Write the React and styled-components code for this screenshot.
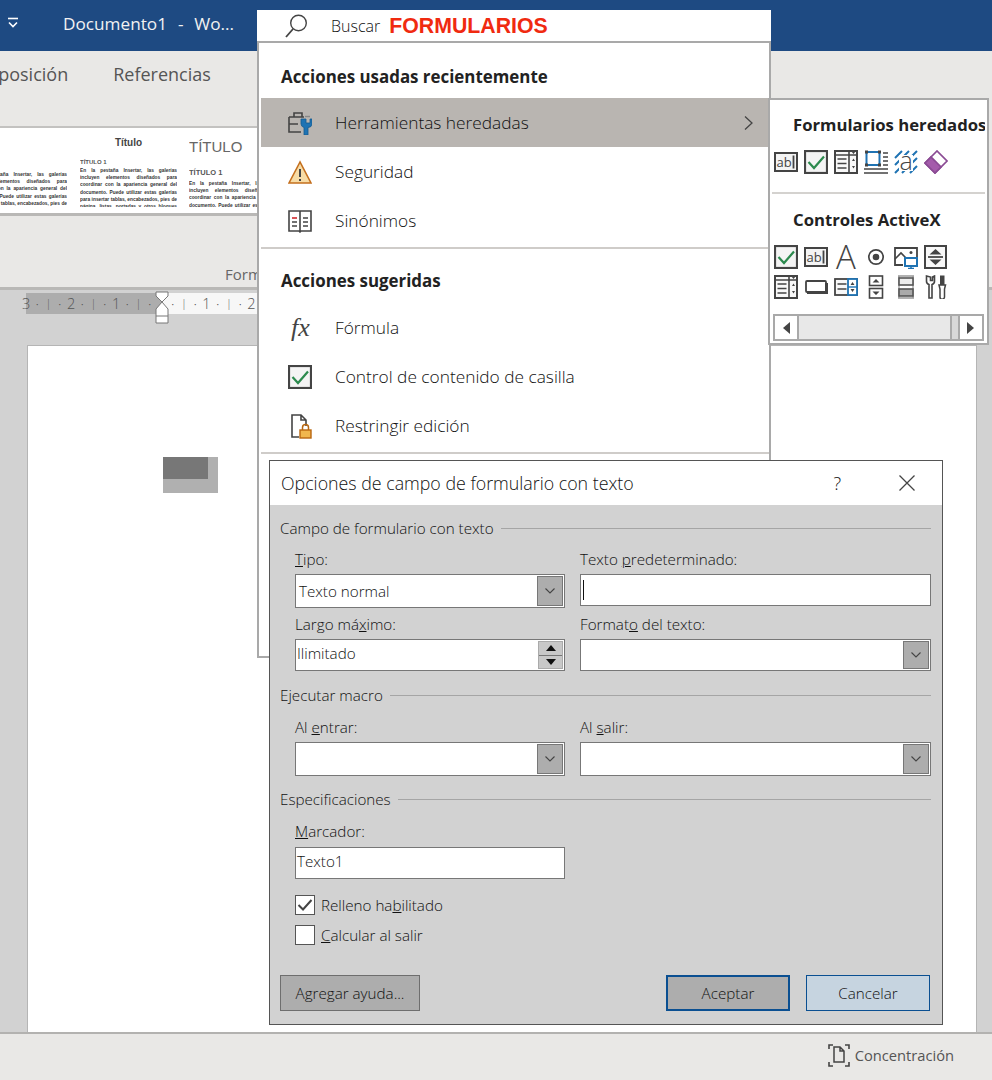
import React from 'react';
import styled, { createGlobalStyle } from 'styled-components';

const GlobalStyle = createGlobalStyle`
  html, body { margin: 0; padding: 0; background: #d2d2d2; }
  body { font-family: "Open Sans", "Noto Sans", sans-serif; color: #262626; }
  * { box-sizing: border-box; }
`;

const Root = styled.div`
  position: relative;
  width: 992px;
  height: 1080px;
  overflow: hidden;
  display: flex;
  flex-direction: column;
`;

/* window chrome, in flow */
const TitleBar = styled.header`
  height: 51px;
  flex: none;
  background: #1e4a82;
  color: #f2f2f2;
  display: flex;
  align-items: center;
  padding: 0 0 5px 7px;
  font-size: 17.2px;
`;
const DocName = styled.span`
  margin-left: 44px;
  white-space: pre;
  word-spacing: 1px;
`;
const Ribbon = styled.section`
  height: 239px;
  flex: none;
  background: #e9e8e6;
  border-bottom: 3px solid #b9b8b6;
  display: flex;
  flex-direction: column;
`;
const Tabs = styled.nav`
  display: flex;
  gap: 45px;
  height: 75px;
  margin-left: -28px;
  padding-top: 11px;
  font-size: 18px;
  color: #555;
  white-space: nowrap;
`;
const Gallery = styled.div`
  height: 90px;
  flex: none;
  margin-right: 100px;
  background: #fff;
  border-top: 2px solid #c3c2c0;
  border-bottom: 3px solid #b9b8b6;
  display: flex;
  overflow: hidden;
`;
const StyleCard = styled.div`
  flex: none;
  width: ${p => p.$w}px;
  margin-left: ${p => p.$left}px;
  height: 79px;
  overflow: hidden;
  font-family: "Liberation Sans", sans-serif;
`;
const CardTitle = styled.div`
  font-size: ${p => p.$size}px;
  line-height: ${p => p.$line}px;
  font-weight: ${p => p.$bold ? 700 : 400};
  text-align: ${p => p.$center ? 'center' : 'left'};
  color: ${p => p.$color || '#444'};
`;
const CardHead = styled.div`
  font-size: ${p => p.$size}px;
  font-weight: 700;
  color: #555;
  margin-top: ${p => p.$top}px;
  line-height: 9px;
`;
const CardBody = styled.p`
  margin: ${p => p.$top || 0}px 0 0;
  font-size: 4.8px;
  line-height: 7.2px;
  font-weight: 700;
  color: #333;
  text-align: justify;
`;
const GroupRow = styled.div`
  flex: 1;
  display: flex;
  align-items: flex-end;
  padding: 0 0 3px 225px;
  font-size: 15px;
  color: #666;
`;
const RulerRow = styled.div`
  height: 55px;
  flex: none;
  display: flex;
  align-items: flex-start;
  padding: 3px 0 0 26px;
  background: #d2d2d2;
`;
const RulerPart = styled.div`
  width: ${p => p.$w}px;
  height: 21px;
  background: ${p => p.$dark ? '#adadad' : '#f7f7f7'};
  display: flex;
  padding-left: ${p => p.$pad}px;
`;
const RulerMark = styled.span`
  width: 11.25px;
  flex: none;
  text-align: center;
  color: #555;
  font-size: ${p => p.$tick ? 10 : 14.5}px;
  line-height: 21px;
  font-weight: 300;
  margin-left: ${p => p.$shift || 0}px;
`;
const Marker = styled.svg`
  position: absolute;
  left: 155px;
  top: 291px;
`;
const DocArea = styled.main`
  flex: 1;
  background: #d2d2d2;
  padding-left: 27px;
`;
const Page = styled.div`
  width: 950px;
  height: 100%;
  background: #fff;
  border: 1px solid #b5b5b5;
  border-bottom: 0;
  padding: 111px 0 0 135px;
`;
const FieldShade = styled.div`
  width: 55px;
  height: 36px;
  background: #b0b0b0;
`;
const FieldCore = styled.div`
  width: 45px;
  height: 22px;
  background: #777;
`;
const StatusBar = styled.footer`
  height: 48px;
  flex: none;
  background: #e9e8e6;
  border-top: 2px solid #b3b2b0;
  display: flex;
  align-items: center;
  justify-content: flex-end;
  gap: 5px;
  padding: 0 38px 4px 0;
  font-size: 14.7px;
  color: #555;
`;

/* search box + menus, floating over the ribbon */
const SearchBox = styled.div`
  position: absolute;
  left: 257px;
  top: 10px;
  width: 514px;
  height: 32px;
  background: #fff;
  display: flex;
  align-items: center;
  padding-left: 27px;
`;
const SearchLabel = styled.span`
  margin-left: 23px;
  font-size: 16px;
  font-weight: 300;
  color: #111;
`;
const SearchHint = styled.span`
  margin-left: 9px;
  font-family: "Liberation Sans", sans-serif;
  font-size: 21.3px;
  font-weight: 700;
  color: #f02a10;
`;
const Menu = styled.div`
  position: absolute;
  left: 257px;
  top: 41px;
  width: 514px;
  height: 617px;
  background: #fff;
  border: 2px solid #a9a9a9;
  padding: 0 0 0 2px;
`;
const MenuHeading = styled.div`
  height: ${p => p.$h}px;
  padding: ${p => p.$top}px 0 0 20px;
  font-size: 16.9px;
  line-height: 24px;
  font-weight: 700;
  color: #222;
`;
const MenuRow = styled.div`
  height: 49px;
  display: flex;
  align-items: center;
  padding: 0 14px 0 27px;
  gap: 23px;
  font-size: 17.3px;
  font-weight: 300;
  color: #111;
  background: ${p => p.$active ? '#b9b5b1' : 'transparent'};
`;
const RowLabel = styled.span`
  flex: 1;
`;
const MenuRule = styled.hr`
  margin: 2px 0 0;
  border: 0;
  height: 2px;
  background: #cfccc9;
`;
const SubMenu = styled.div`
  position: absolute;
  left: 768px;
  top: 98px;
  width: 221px;
  height: 247px;
  background: #fff;
  border: 2px solid #a9a9a9;
  padding: 0 2px;
  display: flex;
  flex-direction: column;
`;
const SubHeading = styled.div`
  padding: ${p => p.$top}px 0 0 21px;
  font-size: 16.7px;
  line-height: 24px;
  font-weight: 700;
  color: #222;
  white-space: nowrap;
  overflow: hidden;
`;
const IconGrid = styled.div`
  display: grid;
  grid-template-columns: repeat(6, 24px);
  grid-auto-rows: 24px;
  gap: 6px;
  margin: ${p => p.$top}px 0 0 2px;
`;
const SubRule = styled.hr`
  margin: 18px 0 0;
  border: 0;
  height: 2px;
  background: #d4d2cf;
`;
const ScrollBar = styled.div`
  margin: 15px 1px 0 1px;
  height: 27px;
  background: #d8d8d8;
  border: 2px solid #a9a9a9;
  display: flex;
  align-items: stretch;
`;
const ScrollButton = styled.div`
  width: ${p => p.$w}px;
  flex: none;
  background: #fff;
  display: flex;
  align-items: center;
  justify-content: center;
  margin-left: ${p => p.$end ? 'auto' : 0};
  border-left: ${p => p.$end ? '2px solid #a9a9a9' : 0};
  border-right: ${p => p.$end ? 0 : '2px solid #a9a9a9'};
`;
const ScrollThumb = styled.div`
  width: 153px;
  background: #e8e8e8;
  border-right: 2px solid #a9a9a9;
`;

/* dialog */
const Dialog = styled.div`
  position: absolute;
  left: 269px;
  top: 460px;
  width: 674px;
  height: 565px;
  background: #d2d2d2;
  border: 1px solid #555;
  display: flex;
  flex-direction: column;
  font-size: 15.2px;
  font-weight: 300;
  color: #111;
`;
const DialogTitle = styled.div`
  height: 44px;
  flex: none;
  background: #fff;
  display: flex;
  align-items: center;
  padding: 0 27px 0 11px;
  font-size: 17.8px;
`;
const TitleText = styled.span`
  flex: 1;
`;
const TitleAction = styled.span`
  font-size: 18px;
  margin-right: 58px;
`;
const DialogBody = styled.div`
  flex: 1;
  padding: 11px 11px 0 10px;
  display: flex;
  flex-direction: column;
`;
const SectionTitle = styled.div`
  height: 24px;
  display: flex;
  align-items: center;
  gap: 7px;
  margin-top: ${p => p.$top || 0}px;
  &::after {
    content: "";
    flex: 1;
    height: 1px;
    background: #a5a5a5;
  }
`;
const FieldGrid = styled.div`
  display: grid;
  grid-template-columns: 270px 351px;
  column-gap: 15px;
  padding-left: 15px;
  margin-top: ${p => p.$top || 0}px;
`;
const Field = styled.label`
  display: flex;
  flex-direction: column;
  margin-bottom: ${p => p.$gap || 0}px;
`;
const FieldLabel = styled.span`
  height: 21px;
  line-height: 21px;
  margin-bottom: ${p => p.$gap ?? 2}px;
`;
const Box = styled.div`
  height: ${p => p.$h || 33}px;
  background: #fff;
  border: 1px solid #777;
  display: flex;
  align-items: center;
  padding: 1px 1px 1px ${p => p.$pad || 1}px;
`;
const BoxValue = styled.span`
  flex: 1;
  margin-top: ${p => p.$lift ? -4 : 0}px;
`;
const Caret = styled.span`
  width: 1px;
  height: 20px;
  background: #111;
`;
const DropButton = styled.span`
  width: 26px;
  height: 100%;
  background: #adadad;
  border: 1px solid #777;
  display: flex;
  align-items: center;
  justify-content: center;
`;
const Spinner = styled.span`
  width: 25px;
  height: 100%;
  display: flex;
  flex-direction: column;
  gap: 1px;
  background: #777;
  border: 1px solid #aaa;
`;
const SpinPart = styled.span`
  flex: 1;
  background: #c8c8c8;
  display: flex;
  align-items: center;
  justify-content: center;
`;
const CheckRow = styled.div`
  display: flex;
  align-items: center;
  gap: 6px;
  margin: ${p => p.$top}px 0 0 15px;
  height: 20px;
`;
const CheckBox = styled.span`
  width: 20px;
  height: 20px;
  background: #fff;
  border: 1px solid #555;
  display: flex;
  align-items: center;
  justify-content: center;
`;
const ButtonRow = styled.div`
  display: flex;
  margin: 30px 1px 0 0;
  gap: 16px;
`;
const Button = styled.div`
  width: ${p => p.$w}px;
  height: 36px;
  display: flex;
  align-items: center;
  justify-content: center;
  background: ${p => p.$bg};
  border: ${p => p.$border};
  margin-right: ${p => p.$push ? 'auto' : 0};
`;

const Ico = styled.svg.attrs(p => ({ viewBox: p.$box || '0 0 24 24' }))`
  width: ${p => p.$w || 24}px;
  height: ${p => p.$h || 24}px;
  flex: none;
  display: block;
  fill: none;
  stroke: #444;
  stroke-width: 1.4;
`;

const IconText = styled.text`
  font-family: ${p => p.$serif ? '"Liberation Serif", serif' : '"Open Sans", sans-serif'};
  font-style: ${p => p.$serif ? 'italic' : 'normal'};
  font-weight: ${p => p.$light ? 300 : 400};
  fill: #444;
  stroke: none;
`;

const green = '#2c8a4e';
const blue = '#1f73b3';

const SearchIcon = () => (
  <Ico>
    <circle cx="14.5" cy="9" r="7.8" />
    <path d="M9 15 2 23" strokeWidth="1.8" />
  </Ico>
);
const QatIcon = () => (
  <Ico $w={12} $h={12} $box="0 0 12 12" style={{ stroke: '#fff' }}>
    <path d="M1 1.5h10" strokeWidth="1.6" />
    <path d="M2 5.5 6 9.5 10 5.5" strokeWidth="1.6" />
  </Ico>
);
const ToolboxIcon = () => (
  <Ico>
    <path d="M1 6h15M1 6v15h12M1 13h9M6 6V2h8v4" strokeWidth="1.6" />
    <path d="M17 5.500h5" stroke="#888" />
    <path d="M13 8v5a4 4 0 0 0 3 3.500V24h4v-7.500A4 4 0 0 0 24 13V8l-2 0v4h-4V8z" fill={blue} stroke="#155a8f" strokeWidth="0.8" />
  </Ico>
);
const WarningIcon = () => (
  <Ico>
    <path d="M12 2 1 23h22z" fill="#f7dca6" stroke="#c46f1d" strokeWidth="1.6" />
    <path d="M12 9v8M12 19v2" stroke="#444" strokeWidth="2" />
  </Ico>
);
const BookIcon = () => (
  <Ico>
    <path d="M1 2h22v20H13l-1 1-1-1H1zM12 2v20" strokeWidth="1.6" />
    <path d="M4 9h5" stroke="#d0282e" strokeWidth="1.6" />
    <path d="M4 13h5M4 17h5M15 9h5M15 13h5M15 17h5" strokeWidth="1.3" />
  </Ico>
);
const FxIcon = () => (
  <Ico $h={28} $box="0 0 24 28">
    <IconText $serif x="3" y="22" fontSize="26">fx</IconText>
  </Ico>
);
const CheckIcon = () => (
  <Ico>
    <rect x="1" y="1" width="22" height="22" fill="#f4f4f4" strokeWidth="2.2" />
    <path d="M4.500 12 10 18 20 6.500" stroke={green} strokeWidth="2.2" />
  </Ico>
);
const RestrictIcon = () => (
  <Ico $h={26} $box="0 0 24 26">
    <path d="M11 24H4V2h9l5 5v6M13 2v5h5" strokeWidth="1.6" />
    <rect x="12" y="17" width="11" height="8" fill="#f0b64d" stroke="#b8660f" />
    <path d="M14.500 17v-2.500a3 3 0 0 1 6 0V17" stroke="#b8660f" strokeWidth="1.500" />
  </Ico>
);
const ChevronRight = () => (
  <Ico $w={12} $h={16} $box="0 0 12 16">
    <path d="M2 1.500 9 8 2 14.500" strokeWidth="1.300" />
  </Ico>
);
const TextFieldIcon = () => (
  <Ico>
    <rect x="1" y="3" width="22" height="18" fill="#f4f4f4" strokeWidth="2" />
    <IconText x="2.500" y="17" fontSize="13">ab</IconText>
    <path d="M19.500 5.500v13" strokeWidth="1.800" />
  </Ico>
);
const DropListIcon = () => (
  <Ico>
    <rect x="1" y="1" width="22" height="22" fill="#f8f8f8" strokeWidth="2" />
    <path d="M15 1v22M1 5h22" strokeWidth="1.600" />
    <path d="M3.500 9h9M3.500 13.500h9M3.500 18h9" strokeWidth="1.500" />
    <path d="M17.500 1.500h4L19.500 4zM18 11h3l-1.500-2.500zM18 16h3l-1.500 2.500z" fill="#444" strokeWidth="0" />
  </Ico>
);
const FrameIcon = () => (
  <Ico>
    <rect x="2.500" y="2" width="13" height="13" stroke={blue} strokeWidth="2" />
    <path d="M1 .5h3v3H1zM14 .5h3v3h-3zM1 13.500h3v3H1zM14 13.500h3v3h-3z" fill="#444" strokeWidth="0" />
    <path d="M19 3h5M19 7h5M19 11h5M19 15h5M0 19h24M0 23h24" strokeWidth="1.600" />
  </Ico>
);
const ShadingIcon = () => (
  <Ico>
    <path d="M1 8 8 1M1 15 15 1M1 23 23 1M8 23 23 8M16 23 23 16" stroke={blue} strokeWidth="2" />
    <rect x="5" y="5" width="14" height="16" fill="#fff" strokeWidth="0" />
    <IconText $light x="5.500" y="20" fontSize="25">a</IconText>
  </Ico>
);
const EraserIcon = () => (
  <Ico>
    <path d="M1 13 13 1l10 10-12 12z" fill="#fff" strokeWidth="1.700" stroke="#8b4b94" />
    <path d="M1 13 7 7l10 10-6 6z" fill="#a45cab" stroke="#8b4b94" strokeWidth="1.700" />
  </Ico>
);
const LabelIcon = () => (
  <Ico>
    <IconText $light x="12" y="24" fontSize="33" textAnchor="middle">A</IconText>
  </Ico>
);
const RadioIcon = () => (
  <Ico>
    <circle cx="12" cy="12" r="7.200" strokeWidth="1.700" />
    <circle cx="12" cy="12" r="3.300" fill="#444" strokeWidth="0" />
  </Ico>
);
const ImageIcon = () => (
  <Ico>
    <path d="M9 20H1V3h22v9" strokeWidth="1.800" />
    <path d="M1 14 7 8l5 5" strokeWidth="1.600" />
    <circle cx="17" cy="7.500" r="1.500" fill="#444" strokeWidth="0" />
    <rect x="11" y="13" width="12" height="8" fill="#fff" stroke={blue} strokeWidth="2" />
    <path d="M14 23.500h6M17 21v2" stroke={blue} strokeWidth="1.500" />
  </Ico>
);
const SpinFrameIcon = () => (
  <Ico>
    <rect x="1" y="1" width="21" height="22" fill="#f8f8f8" strokeWidth="2" />
    <path d="M4 12h15" strokeWidth="1.800" />
    <path d="M5.500 9.500 11.500 4l6 5.500zM5.500 14.500 11.500 20l6-5.500z" fill="#444" strokeWidth="0" />
  </Ico>
);
const ButtonIcon = () => (
  <Ico>
    <rect x="2" y="6" width="20" height="11" rx="1" strokeWidth="1.800" fill="#fff" />
    <path d="M3 17.500h19.500V8" strokeWidth="3" />
  </Ico>
);
const ComboSpinIcon = () => (
  <Ico>
    <rect x="1" y="4" width="22" height="16" fill="#f8f8f8" strokeWidth="1.800" />
    <path d="M3.500 9h9M3.500 14h9" strokeWidth="1.500" />
    <rect x="14" y="4" width="9" height="16" fill="#fff" stroke={blue} strokeWidth="1.800" />
    <path d="M14 12h9" stroke={blue} />
    <path d="M16.500 10h4L18.500 7zM16.500 14h4L18.500 17z" fill="#444" strokeWidth="0" />
  </Ico>
);
const SpinIcon = () => (
  <Ico>
    <rect x="5.500" y="1" width="13" height="9.500" fill="#fff" strokeWidth="1.600" />
    <rect x="5.500" y="13.500" width="13" height="9.500" fill="#fff" strokeWidth="1.600" />
    <path d="M8.500 7.500h7L12 4zM8.500 16.500h7L12 20z" fill="#444" strokeWidth="0" />
  </Ico>
);
const ToggleIcon = () => (
  <Ico>
    <path d="M4 1h16M4 23h16M5 1v22M19 1v22" strokeWidth="1.300" stroke="#999" />
    <rect x="5" y="3" width="14" height="7" stroke="#555" strokeWidth="1.600" fill="#eee" />
    <rect x="5" y="14" width="14" height="7" fill="#aaa" stroke="#555" strokeWidth="1.600" />
  </Ico>
);
const ToolsIcon = () => (
  <Ico>
    <path d="M2.500 1v5a3.500 3.500 0 0 0 2.500 3.500V23h3V9.500A3.500 3.500 0 0 0 10.500 6V1L8.500 2v3.500h-2V2z" strokeWidth="1.600" fill="#fff" />
    <rect x="16.500" y="1" width="3.500" height="9" strokeWidth="1" fill="#444" />
    <path d="M15 10h6.500l-1 4v8a2 2 0 0 1-4.500 0v-8z" strokeWidth="1.500" fill="#fff" />
  </Ico>
);
const ChevronDown = () => (
  <Ico $w={12} $h={8} $box="0 0 12 8">
    <path d="M1.500 1.500 6 6l4.500-4.500" strokeWidth="1.100" />
  </Ico>
);
const Triangle = ({ up }) => (
  <Ico $w={10} $h={6} $box="0 0 10 6">
    <path d={up ? 'M0 6 5 0l5 6z' : 'M0 0l5 6 5-6z'} fill="#111" strokeWidth="0" />
  </Ico>
);
const ScrollArrow = ({ left }) => (
  <Ico $w={8} $h={12} $box="0 0 8 12">
    <path d={left ? 'M8 0 1 6l7 6z' : 'M0 0l7 6-7 6z'} fill="#444" strokeWidth="0" />
  </Ico>
);
const TickIcon = () => (
  <Ico $w={16} $h={14} $box="0 0 16 14">
    <path d="M1.500 7 6 11.500 14.500 2" strokeWidth="2" />
  </Ico>
);
const FocusIcon = () => (
  <Ico $w={22} $h={23} $box="0 0 22 23">
    <path d="M1 5V1h4M17 1h4v4M1 18v4h4M17 22h4v-4" strokeWidth="1.600" />
    <path d="M6 18V3h6l4 4v11zM12 3v4h4" strokeWidth="1.500" />
  </Ico>
);

const STYLE_BODY = 'En la pestaña Insertar, las galerías incluyen elementos diseñados para coordinar con la apariencia general del documento. Puede utilizar estas galerías para insertar tablas, encabezados, pies de página, listas, portadas y otros bloques de creación del documento.';

const RULER_LEFT = ['3', '·', '|', '·', '2', '·', '|', '·', '1', '·', '|', '·'];
const RULER_RIGHT = ['·', '|', '·', '1', '·', '|', '·', '2'];

const RulerMarks = ({ marks, shift }) => marks.map((m, i) => (
  <RulerMark key={i} $tick={m === '|'} $shift={i === 0 ? shift : 0}>{m}</RulerMark>
));

const Combo = ({ value, h }) => (
  <Box $h={h} $pad={3}>
    <BoxValue>{value}</BoxValue>
    <DropButton><ChevronDown /></DropButton>
  </Box>
);

export default function App() {
  return (
    <Root>
      <GlobalStyle />
      <TitleBar>
        <QatIcon />
        <DocName>Documento1  -  Wo...</DocName>
      </TitleBar>
      <Ribbon>
        <Tabs>
          <span>Disposición</span>
          <span>Referencias</span>
        </Tabs>
        <Gallery>
          <StyleCard $w={97} $left={-30}>
            <CardTitle $size={10.5} $line={34} $color="#3a6bc0">Título</CardTitle>
            <CardBody $top={9}>{STYLE_BODY}</CardBody>
          </StyleCard>
          <StyleCard $w={97} $left={13}>
            <CardTitle $size={10} $line={30} $bold $center>Título</CardTitle>
            <CardHead $size={6} $top={0}>TÍTULO 1</CardHead>
            <CardBody>{STYLE_BODY}</CardBody>
          </StyleCard>
          <StyleCard $w={96} $left={12}>
            <CardTitle $size={15} $line={38} $color="#666">TÍTULO</CardTitle>
            <CardHead $size={7.5} $top={2}>TÍTULO 1</CardHead>
            <CardBody $top={3}>{STYLE_BODY}</CardBody>
          </StyleCard>
        </Gallery>
        <GroupRow>Form</GroupRow>
      </Ribbon>
      <RulerRow>
        <RulerPart $dark $w={135} $pad={0}>
          <RulerMarks marks={RULER_LEFT} shift={-5.6} />
        </RulerPart>
        <RulerPart $w={96} $pad={6}>
          <RulerMarks marks={RULER_RIGHT} />
        </RulerPart>
      </RulerRow>
      <Marker width="14" height="34" viewBox="0 0 14 34">
        <path d="M1 1h12v4l-6 6-6-6zM7 11l6 7v14H1V18zM1 25h12" fill="#fff" stroke="#777" />
      </Marker>
      <DocArea>
        <Page>
          <FieldShade><FieldCore /></FieldShade>
        </Page>
      </DocArea>
      <StatusBar>
        <FocusIcon />
        Concentración
      </StatusBar>

      <SearchBox>
        <SearchIcon />
        <SearchLabel>Buscar</SearchLabel>
        <SearchHint>FORMULARIOS</SearchHint>
      </SearchBox>

      <Menu>
        <MenuHeading $h={55} $top={22}>Acciones usadas recientemente</MenuHeading>
        <MenuRow $active>
          <ToolboxIcon />
          <RowLabel>Herramientas heredadas</RowLabel>
          <ChevronRight />
        </MenuRow>
        <MenuRow><WarningIcon /><RowLabel>Seguridad</RowLabel></MenuRow>
        <MenuRow><BookIcon /><RowLabel>Sinónimos</RowLabel></MenuRow>
        <MenuRule />
        <MenuHeading $h={54} $top={20}>Acciones sugeridas</MenuHeading>
        <MenuRow><FxIcon /><RowLabel>Fórmula</RowLabel></MenuRow>
        <MenuRow><CheckIcon /><RowLabel>Control de contenido de casilla</RowLabel></MenuRow>
        <MenuRow><RestrictIcon /><RowLabel>Restringir edición</RowLabel></MenuRow>
        <MenuRule />
      </Menu>

      <SubMenu>
        <SubHeading $top={13}>Formularios heredados</SubHeading>
        <IconGrid $top={13}>
          <TextFieldIcon />
          <CheckIcon />
          <DropListIcon />
          <FrameIcon />
          <ShadingIcon />
          <EraserIcon />
        </IconGrid>
        <SubRule />
        <SubHeading $top={14}>Controles ActiveX</SubHeading>
        <IconGrid $top={13}>
          <CheckIcon />
          <TextFieldIcon />
          <LabelIcon />
          <RadioIcon />
          <ImageIcon />
          <SpinFrameIcon />
          <DropListIcon />
          <ButtonIcon />
          <ComboSpinIcon />
          <SpinIcon />
          <ToggleIcon />
          <ToolsIcon />
        </IconGrid>
        <ScrollBar>
          <ScrollButton $w={24}><ScrollArrow left /></ScrollButton>
          <ScrollThumb />
          <ScrollButton $w={24} $end><ScrollArrow /></ScrollButton>
        </ScrollBar>
      </SubMenu>

      <Dialog>
        <DialogTitle>
          <TitleText>Opciones de campo de formulario con texto</TitleText>
          <TitleAction>?</TitleAction>
          <Ico $w={16} $h={16} $box="0 0 16 16">
            <path d="M.5.5 15.500 15.500M15.500.5.5 15.500" strokeWidth="1.300" />
          </Ico>
        </DialogTitle>
        <DialogBody>
          <SectionTitle>Campo de formulario con texto</SectionTitle>
          <FieldGrid $top={9}>
            <Field $gap={6}>
              <FieldLabel $gap={4}><u>T</u>ipo:</FieldLabel>
              <Combo value="Texto normal" h={34} />
            </Field>
            <Field $gap={6}>
              <FieldLabel $gap={4}>Texto <u>p</u>redeterminado:</FieldLabel>
              <Box $h={32} $pad={2}><Caret /></Box>
            </Field>
            <Field>
              <FieldLabel $gap={4}>Largo má<u>x</u>imo:</FieldLabel>
              <Box $h={32}>
                <BoxValue $lift>Ilimitado</BoxValue>
                <Spinner>
                  <SpinPart><Triangle up /></SpinPart>
                  <SpinPart><Triangle /></SpinPart>
                </Spinner>
              </Box>
            </Field>
            <Field>
              <FieldLabel $gap={4}>Format<u>o</u> del texto:</FieldLabel>
              <Combo h={32} />
            </Field>
          </FieldGrid>
          <SectionTitle $top={12}>Ejecutar macro</SectionTitle>
          <FieldGrid $top={10}>
            <Field>
              <FieldLabel $gap={4}>Al <u>e</u>ntrar:</FieldLabel>
              <Combo h={34} />
            </Field>
            <Field>
              <FieldLabel $gap={4}>Al <u>s</u>alir:</FieldLabel>
              <Combo h={34} />
            </Field>
          </FieldGrid>
          <SectionTitle $top={11}>Especificaciones</SectionTitle>
          <FieldGrid $top={10}>
            <Field>
              <FieldLabel $gap={5}><u>M</u>arcador:</FieldLabel>
              <Box $h={32}><BoxValue $lift>Texto1</BoxValue></Box>
            </Field>
          </FieldGrid>
          <CheckRow $top={16}>
            <CheckBox><TickIcon /></CheckBox>
            <span>Relleno ha<u>b</u>ilitado</span>
          </CheckRow>
          <CheckRow $top={10}>
            <CheckBox />
            <span><u>C</u>alcular al salir</span>
          </CheckRow>
          <ButtonRow>
            <Button $w={140} $bg="#adadad" $border="1px solid #6e6e6e" $push>A<u>g</u>regar ayuda...</Button>
            <Button $w={124} $bg="#adadad" $border="2px solid #0a4f91">Aceptar</Button>
            <Button $w={124} $bg="#c6d4e0" $border="1px solid #0a4f91">Cancelar</Button>
          </ButtonRow>
        </DialogBody>
      </Dialog>
    </Root>
  );
}
